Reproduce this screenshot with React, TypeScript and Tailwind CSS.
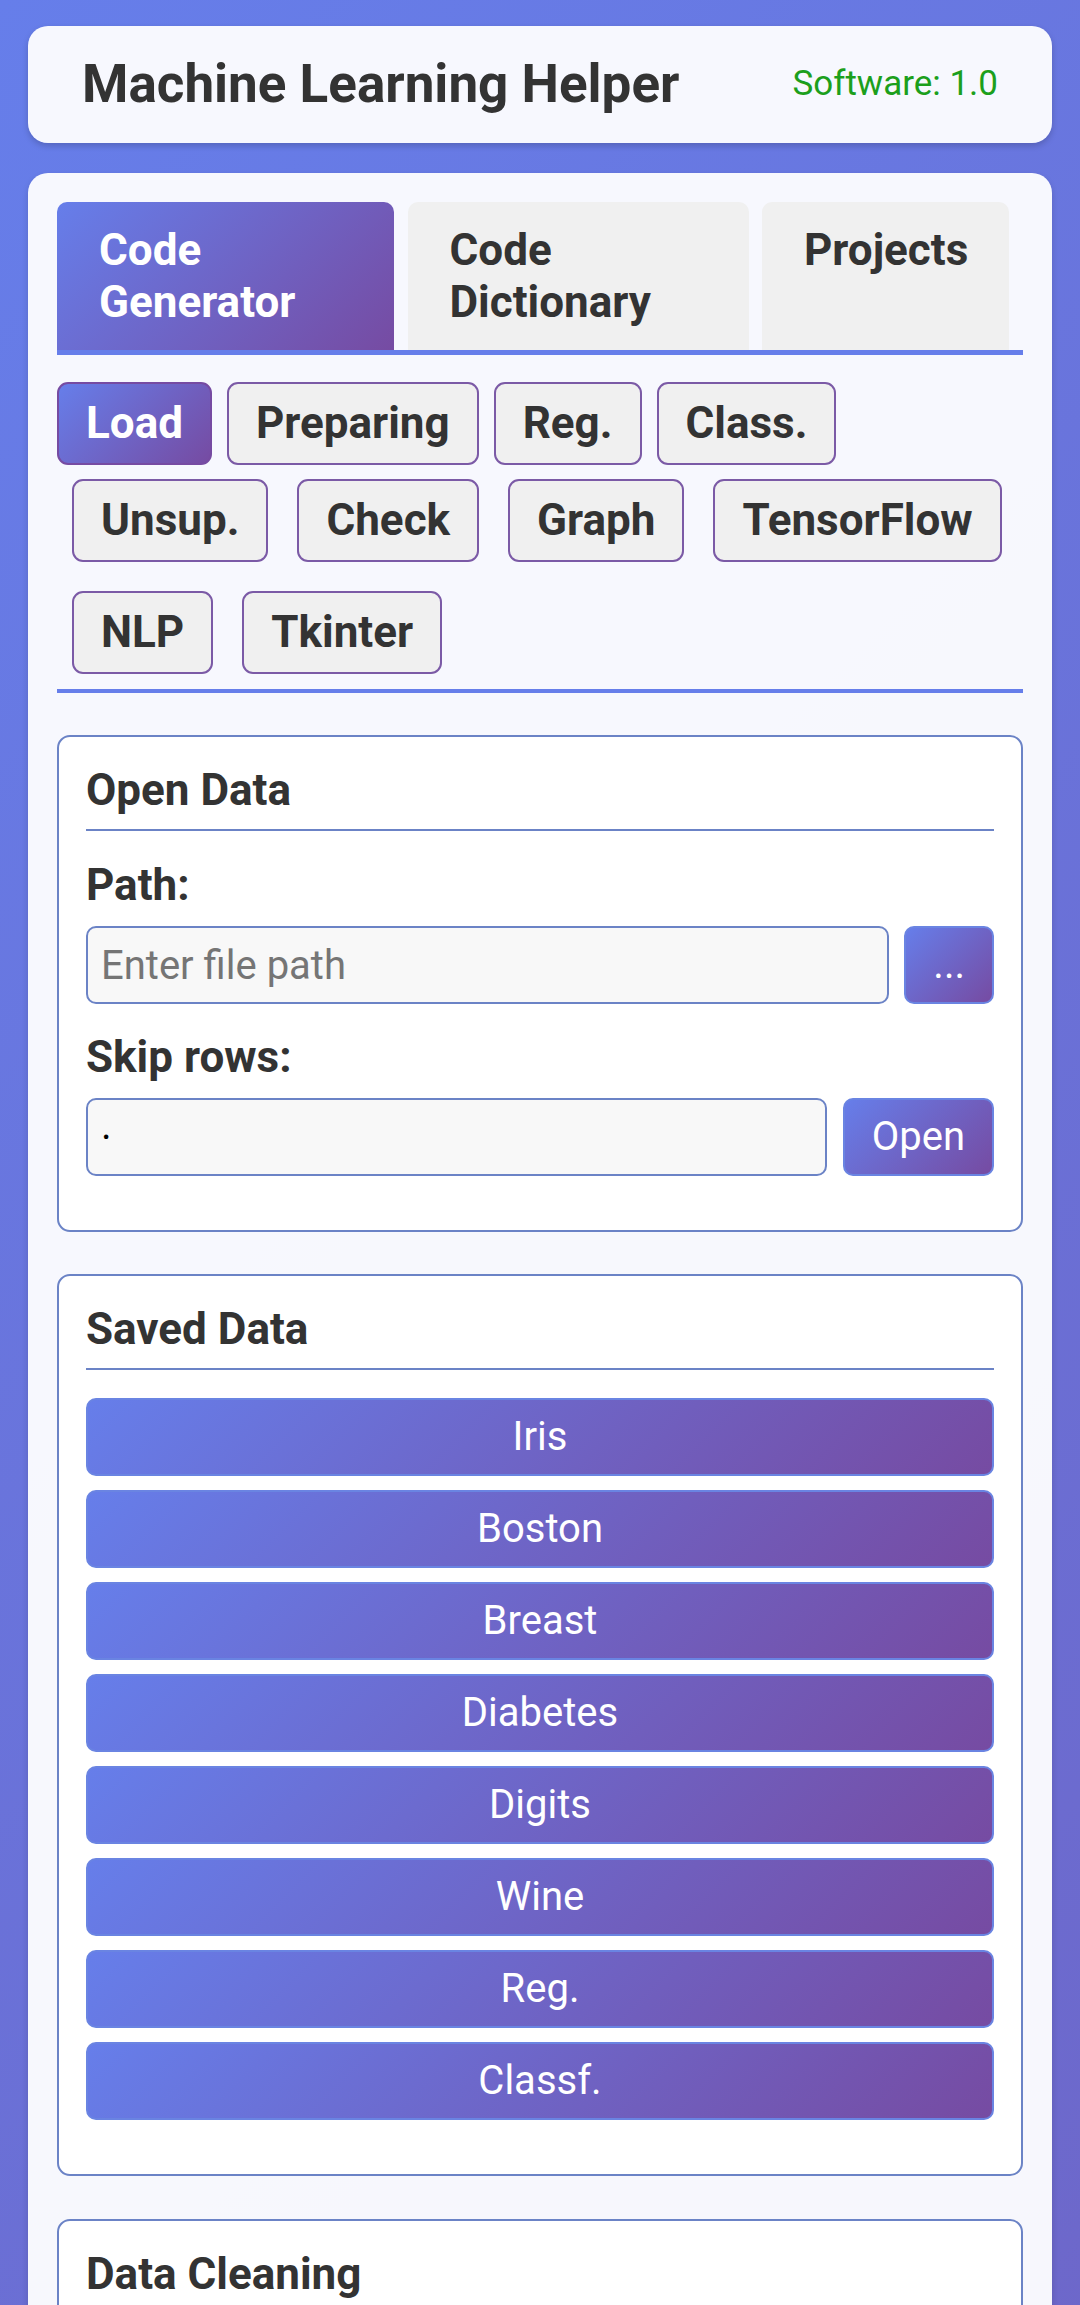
const tabs = [
  { label: "Code Generator", width: "w-[337px]", active: true },
  { label: "Code Dictionary", width: "w-[341px]", active: false },
  { label: "Projects", width: "w-[247px]", active: false },
];

const firstRow = ["Load", "Preparing", "Reg.", "Class."];
const otherRows = ["Unsup.", "Check", "Graph", "TensorFlow", "NLP", "Tkinter"];

const datasets = ["Iris", "Boston", "Breast", "Diabetes", "Digits", "Wine", "Reg.", "Classf."];

const gradient = "bg-[linear-gradient(135deg,#667eea_0%,#764ba2_100%)]";

function SubButton({ label, active }: { label: string; active?: boolean }) {
  return (
    <button
      className={
        active
          ? `${gradient} rounded-[11px] border-2 border-[#764ba2] px-[27px] py-[13px] text-[44px] leading-[53px] font-bold text-white`
          : "rounded-[11px] border-2 border-[#7b5aa6] bg-[#f0f0f0] px-[27px] py-[13px] text-[44px] leading-[53px] font-bold text-[#333]"
      }
    >
      {label}
    </button>
  );
}

function SectionTitle({ children }: { children: string }) {
  return (
    <h3 className="mb-[28px] border-b-2 border-[#6b83c6] pb-[13px] text-[44px] leading-[52px] font-bold text-[#333]">
      {children}
    </h3>
  );
}

export default function App() {
  return (
    <div className="min-h-screen bg-[linear-gradient(135deg,#667eea_0%,#764ba2_100%)] bg-[length:100%_6600px] bg-no-repeat px-[28px] pt-[26px] pb-[40px] font-[Roboto,sans-serif]">
      {/* Header */}
      <header className="flex h-[117px] items-center justify-between rounded-[20px] bg-white/95 px-[54px] shadow-[0_3px_6px_rgba(0,0,0,0.18)]">
        <h1 className="text-[53px] font-bold text-[#333]">Machine Learning Helper</h1>
        <span className="text-[35px] text-[#1c9f1c]">Software: 1.0</span>
      </header>

      {/* Main panel */}
      <main className="mt-[30px] rounded-[20px] bg-white/95 p-[29px] shadow-[0_3px_6px_rgba(0,0,0,0.15)]">
        {/* Tabs */}
        <div className="flex gap-[13.5px] border-b-[5px] border-[#667eea]">
          {tabs.map((tab) => (
            <button
              key={tab.label}
              className={`${tab.width} flex items-start rounded-t-[10px] px-[42px] py-[22px] text-left text-[44px] leading-[52px] font-bold ${
                tab.active ? `${gradient} text-white` : "bg-[#f0f0f0] text-[#333]"
              }`}
            >
              <span>{tab.label}</span>
            </button>
          ))}
        </div>

        {/* Sub navigation */}
        <div className="mt-[27px] border-b-[4px] border-[#667eea]">
          <div className="flex gap-[15px]">
            {firstRow.map((label, i) => (
              <SubButton key={label} label={label} active={i === 0} />
            ))}
          </div>
          <div className="flex flex-wrap gap-x-[29px] gap-y-[29px] px-[15px] pt-[14px] pb-[15px]">
            {otherRows.map((label) => (
              <SubButton key={label} label={label} />
            ))}
          </div>
        </div>

        {/* Open Data */}
        <section className="mt-[42px] rounded-[13px] border-2 border-[#6b83c6] bg-white p-[27px]">
          <SectionTitle>Open Data</SectionTitle>

          <div className="mb-[27px]">
            <label className="mb-[15px] block text-[44px] leading-[52px] font-bold text-[#333]">Path:</label>
            <div className="flex gap-[15px]">
              <input
                className="h-[78px] min-w-0 flex-1 rounded-[10px] border-2 border-[#6b83c6] bg-[#f8f8f8] px-[13px] text-[40px] text-black outline-none placeholder:text-[#757575]"
                placeholder="Enter file path"
              />
              <button className={`${gradient} h-[78px] rounded-[10px] border-2 border-[#6a84e2] px-[27px] text-[40px] text-white`}>
                ...
              </button>
            </div>
          </div>

          <div className="mb-[27px]">
            <label className="mb-[15px] block text-[44px] leading-[52px] font-bold text-[#333]">Skip rows:</label>
            <div className="flex gap-[16px]">
              <input
                className="h-[78px] min-w-0 flex-1 rounded-[10px] border-2 border-[#6b83c6] bg-[#f8f8f8] px-[13px] text-[40px] text-black outline-none"
                defaultValue="·"
              />
              <button className={`${gradient} h-[78px] rounded-[10px] border-2 border-[#6a84e2] px-[27px] text-[40px] text-white`}>
                Open
              </button>
            </div>
          </div>
        </section>

        {/* Saved Data */}
        <section className="mt-[42px] rounded-[13px] border-2 border-[#6b83c6] bg-white p-[27px]">
          <SectionTitle>Saved Data</SectionTitle>
          <div className="mb-[27px] flex flex-col gap-[14px]">
            {datasets.map((name) => (
              <button
                key={name}
                className={`${gradient} h-[78px] w-full rounded-[10px] border-2 border-[#6a84e2] text-[40px] text-white`}
              >
                {name}
              </button>
            ))}
          </div>
        </section>

        {/* Data Cleaning */}
        <section className="mt-[43px] h-[300px] rounded-[13px] border-2 border-[#6b83c6] bg-white p-[27px]">
          <SectionTitle>Data Cleaning</SectionTitle>
        </section>
      </main>
    </div>
  );
}
